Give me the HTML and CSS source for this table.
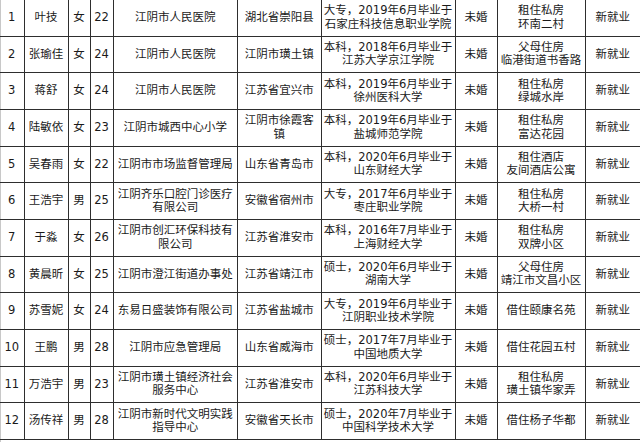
FILE: index.html
```html
<!DOCTYPE html>
<html lang="zh-CN">
<head>
<meta charset="utf-8">
<title>新就业人员名单</title>
<link rel="stylesheet" href="styles.css">
</head>
<body>
<table class="roster">
<colgroup>
<col class="c-no"><col class="c-name"><col class="c-sex"><col class="c-age"><col class="c-org"><col class="c-home"><col class="c-edu"><col class="c-mar"><col class="c-house"><col class="c-stat">
</colgroup>
<tbody>
<tr><td>1</td><td>叶技</td><td>女</td><td>22</td><td>江阴市人民医院</td><td>湖北省崇阳县</td><td>大专，2019年6月毕业于<br>石家庄科技信息职业学院</td><td>未婚</td><td>租住私房<br>环南二村</td><td>新就业</td></tr>
<tr><td>2</td><td>张瑜佳</td><td>女</td><td>24</td><td>江阴市人民医院</td><td>江阴市璜土镇</td><td>本科，2018年6月毕业于<br>江苏大学京江学院</td><td>未婚</td><td>父母住房<br>临港街道书香路</td><td>新就业</td></tr>
<tr><td>3</td><td>蒋舒</td><td>女</td><td>24</td><td>江阴市人民医院</td><td>江苏省宜兴市</td><td>本科，2019年6月毕业于<br>徐州医科大学</td><td>未婚</td><td>租住私房<br>绿城水岸</td><td>新就业</td></tr>
<tr><td>4</td><td>陆敏依</td><td>女</td><td>23</td><td>江阴市城西中心小学</td><td>江阴市徐霞客<br>镇</td><td>本科，2019年6月毕业于<br>盐城师范学院</td><td>未婚</td><td>租住私房<br>富达花园</td><td>新就业</td></tr>
<tr><td>5</td><td>吴春雨</td><td>女</td><td>22</td><td>江阴市市场监督管理局</td><td>山东省青岛市</td><td>本科，2020年6月毕业于<br>山东财经大学</td><td>未婚</td><td>租住酒店<br>友间酒店公寓</td><td>新就业</td></tr>
<tr><td>6</td><td>王浩宇</td><td>男</td><td>25</td><td>江阴齐乐口腔门诊医疗<br>有限公司</td><td>安徽省宿州市</td><td>大专，2017年6月毕业于<br>枣庄职业学院</td><td>未婚</td><td>租住私房<br>大桥一村</td><td>新就业</td></tr>
<tr><td>7</td><td>于淼</td><td>女</td><td>26</td><td>江阴市创汇环保科技有<br>限公司</td><td>江苏省淮安市</td><td>本科，2016年7月毕业于<br>上海财经大学</td><td>未婚</td><td>租住私房<br>双牌小区</td><td>新就业</td></tr>
<tr><td>8</td><td>黄晨昕</td><td>女</td><td>25</td><td>江阴市澄江街道办事处</td><td>江苏省靖江市</td><td>硕士，2020年6月毕业于<br>湖南大学</td><td>未婚</td><td>父母住房<br>靖江市文昌小区</td><td>新就业</td></tr>
<tr><td>9</td><td>苏雪妮</td><td>女</td><td>24</td><td>东易日盛装饰有限公司</td><td>江苏省盐城市</td><td>大专，2019年6月毕业于<br>江阴职业技术学院</td><td>未婚</td><td>借住颐康名苑</td><td>新就业</td></tr>
<tr><td>10</td><td>王鹏</td><td>男</td><td>28</td><td>江阴市应急管理局</td><td>山东省威海市</td><td>硕士，2017年7月毕业于<br>中国地质大学</td><td>未婚</td><td>借住花园五村</td><td>新就业</td></tr>
<tr><td>11</td><td>万浩宇</td><td>男</td><td>23</td><td>江阴市璜土镇经济社会<br>服务中心</td><td>江苏省淮安市</td><td>本科，2020年6月毕业于<br>江苏科技大学</td><td>未婚</td><td>租住私房<br>璜土镇华家弄</td><td>新就业</td></tr>
<tr><td>12</td><td>汤传祥</td><td>男</td><td>28</td><td>江阴市新时代文明实践<br>指导中心</td><td>安徽省天长市</td><td>硕士，2020年7月毕业于<br>中国科学技术大学</td><td>未婚</td><td>借住杨子华都</td><td>新就业</td></tr>
</tbody>
</table>
</body>
</html>
```

FILE: styles.css
```css
html, body {
  margin: 0;
  padding: 0;
  background: #ffffff;
}

body {
  width: 640px;
  height: 442px;
  overflow: hidden;
  box-shadow: inset 1px 0 0 #c8c8c8;
}

.roster {
  width: 640px;
  table-layout: fixed;
  border-collapse: collapse;
  font-family: "DejaVu Sans", "Noto Sans CJK SC", sans-serif;
  font-size: 11.5px;
  line-height: 13.4px;
  color: #1a1a1a;
}

.roster td {
  height: 35.67px;
  padding: 0;
  text-align: center;
  vertical-align: middle;
  white-space: nowrap;
  border: 1px solid #2e2e2e;
  overflow: hidden;
}

.roster tr:first-child td {
  border-top: none;
}

.roster td:first-child {
  border-left: none;
}

.roster td:last-child {
  border-right: none;
}

.c-no { width: 24px; }
.c-name { width: 44px; }
.c-sex { width: 22px; }
.c-age { width: 23px; }
.c-org { width: 124.5px; }
.c-home { width: 83.5px; }
.c-edu { width: 134px; }
.c-mar { width: 42px; }
.c-house { width: 88px; }
.c-stat { width: 55px; }
```
